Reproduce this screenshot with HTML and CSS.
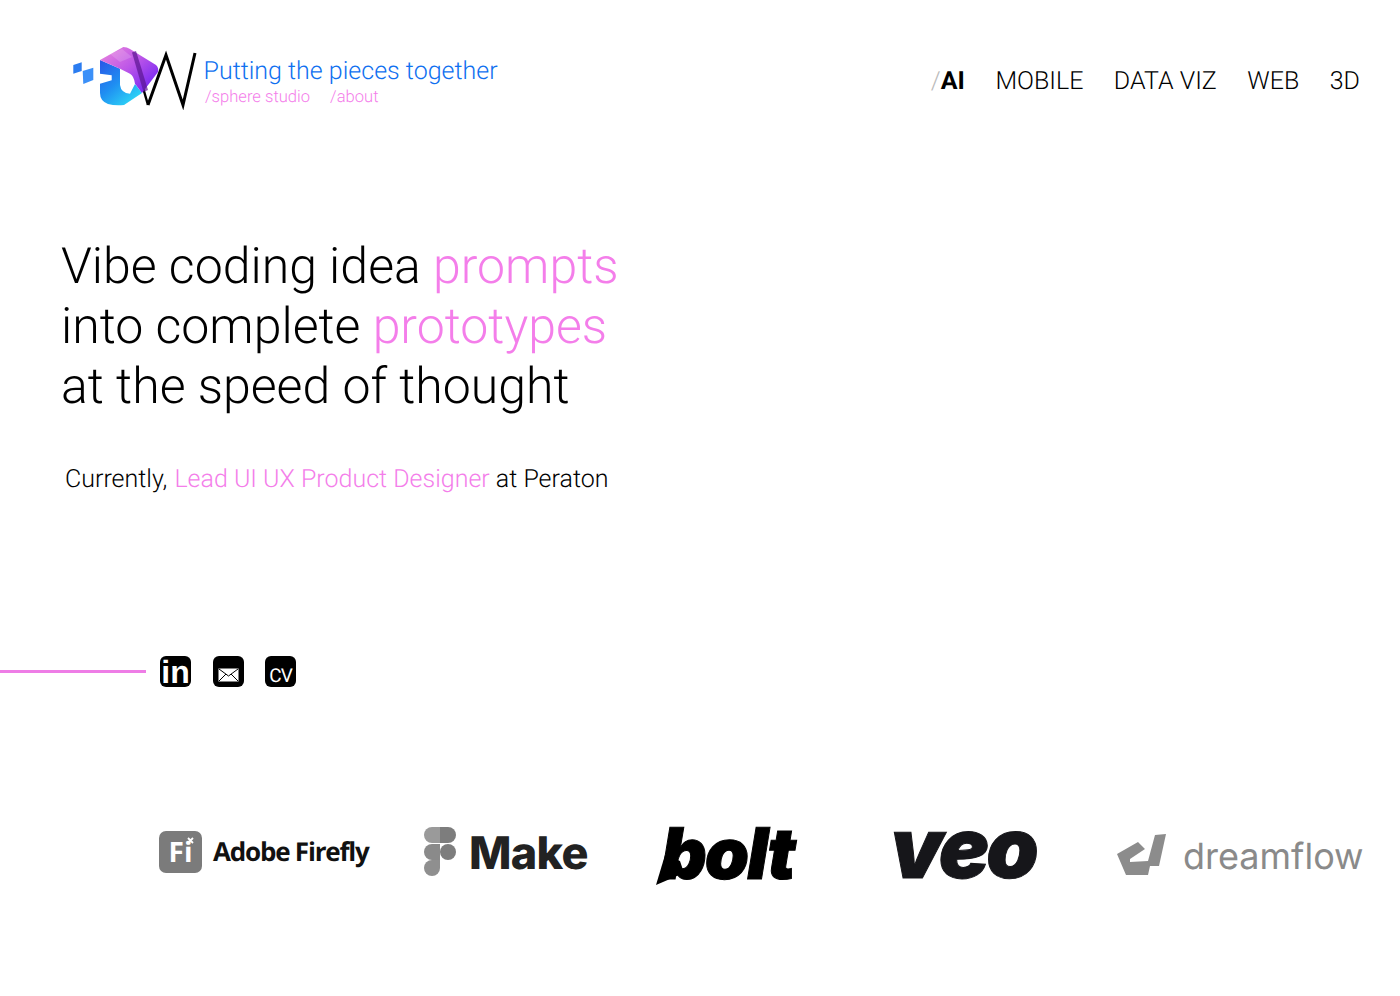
FILE: index.html
```html
<!DOCTYPE html>
<html lang="en">
<head>
<meta charset="utf-8">
<title>Sphere Studio</title>
<link rel="stylesheet" href="styles.css">
</head>
<body>
<header class="topbar">
  <div class="brand">
    <svg class="logo" width="128" height="64" viewBox="0 0 128 64" aria-label="Logo">
      <defs>
        <linearGradient id="cyan" x1="0" y1="0" x2="0.8" y2="1"><stop offset="0" stop-color="#2a55e6"/><stop offset="0.5" stop-color="#1f8ff2"/><stop offset="1" stop-color="#2fdcf6"/></linearGradient>
        <linearGradient id="purple" x1="0" y1="0" x2="1" y2="0.9"><stop offset="0" stop-color="#ee88dc"/><stop offset="0.5" stop-color="#bb55e8"/><stop offset="1" stop-color="#6a1ff4"/></linearGradient>
      </defs>
      <path d="M63 7 L78 59" fill="none" stroke="#000" stroke-width="2.4"/>
      <path d="M78 59 L96 9 L113 59 L125 7" fill="none" stroke="#000" stroke-width="3"/>
      <path d="M3.3 19 L11.7 16.3 L11.7 25 L3.3 27.7Z" fill="#2b7cf0"/>
      <path d="M12.7 25 L23.3 21.7 L23.3 34 L13.3 38Z" fill="#3b90f8"/>
      <path d="M30 14 L50 22.7 L50 39 Q51 47 60 47.7 L65 38 L72 47 L54 59 Q45 60 38 58 Q30 55 30 47 L30 37.7 L41.7 34.3 L41.7 29.3 L30 27.7Z" fill="url(#cyan)"/>
      <path d="M30 14 L53.3 1 Q57 1 60 3 L86 19 Q89 22 88 26 L72 47 L65 37.7 Q64 30 60 27.7 L50 22.7Z" fill="url(#purple)"/>
      <path d="M40 8 L52 3 L62 11 L50 16Z" fill="#fff" opacity="0.16"/>
      <path d="M62 6.5 L66 5 L78 44 L73.5 46Z" fill="#5a1590" opacity="0.7"/>
    </svg>
    <div class="brand-text">
      <p class="tagline">Putting the pieces together</p>
      <nav class="sublinks"><span>/sphere studio</span><span>/about</span></nav>
    </div>
  </div>
  <nav class="mainnav">
    <span class="nav-item"><span class="slash">/</span><b>AI</b></span>
    <span class="nav-item">MOBILE</span>
    <span class="nav-item">DATA VIZ</span>
    <span class="nav-item">WEB</span>
    <span class="nav-item">3D</span>
  </nav>
</header>

<main>
  <section class="hero">
    <h1>Vibe coding idea <em>prompts</em><br>into complete <em>prototypes</em><br>at the speed of thought</h1>
    <p class="current">Currently, <em class="role">Lead UI UX Product Designer</em> at Peraton</p>
  </section>

  <section class="social">
    <div class="rule"></div>
    <div class="icons">
      <span class="sq sq-in">in</span>
      <span class="sq sq-mail"><svg width="21" height="14" viewBox="0 0 21 14"><rect x="0.5" y="0.5" width="20" height="13" fill="#fff"/><path d="M1 1 L10.5 8 L20 1 M1 13 L8 6 M20 13 L13 6" fill="none" stroke="#000" stroke-width="1"/></svg></span>
      <span class="sq sq-cv">CV</span>
    </div>
  </section>

  <section class="tools">
    <div class="tool firefly"><span class="fi">Fi<svg class="spark" width="7" height="7" viewBox="0 0 7 7"><path d="M1 1 L6 6 M6 1 L1 6" stroke="#fff" stroke-width="1.8"/></svg></span><span class="firefly-name">Adobe Firefly</span></div>
    <div class="tool make">
      <svg width="34" height="50" viewBox="0 0 34 50"><path d="M1 8 A8 8 0 0 1 9 0 H17 V16 H9 A8 8 0 0 1 1 8Z" fill="#9a9a9a"/><path d="M17 0 H25 A8 8 0 0 1 25 16 H17Z" fill="#7d7d7d"/><circle cx="25" cy="25" r="8" fill="#7d7d7d"/><path d="M1 25 A8 8 0 0 1 9 17 H17 V33 H9 A8 8 0 0 1 1 25Z" fill="#8a8a8a"/><path d="M1 41 A8 8 0 0 1 9 33 H17 V41 A8 8 0 0 1 1 41Z" fill="#8f8f8f"/></svg>
      <span class="make-name">Make</span>
    </div>
    <div class="tool bolt"><svg class="bolt-tail" width="30" height="30" viewBox="0 0 30 30"><path d="M0 30 L9 0 L24 6 L28 18Z" fill="#000"/></svg><span class="bolt-name">bolt</span></div>
    <div class="tool veo"><span class="veo-name">veo</span></div>
    <div class="tool dream">
      <svg class="dream-mark" width="52" height="44" viewBox="0 0 52 44"><path d="M0 21 L21 9 L28 16 L13 26 L13 29 L31 28 L38 2 L49 1 L42 33 L33 33 L31 42 L9 42Z" fill="#8c8c8c"/></svg>
      <span class="dream-name">dreamflow</span>
    </div>
  </section>
</main>
</body>
</html>
```
FILE: styles.css
```css
* { box-sizing: border-box; }
html, body { margin: 0; padding: 0; }
body { width: 1400px; height: 996px; background: #fff; color: #000; font-family: Roboto, "Liberation Sans", sans-serif; font-weight: 300; overflow: hidden; text-rendering: geometricPrecision; }
em { font-style: normal; color: #f47eea; }
p, h1 { margin: 0; }

.topbar { display: flex; justify-content: space-between; align-items: flex-start; padding: 46px 40px 0 70px; height: 237px; }
.brand { display: flex; align-items: flex-start; gap: 5.5px; }
.logo { display: block; }
.brand-text { padding-top: 10px; }
.tagline { font-size: 25px; line-height: 32px; color: #0f70f0; }
.sublinks { display: flex; gap: 20px; padding-left: 1.5px; font-size: 16.6px; line-height: 19px; color: #f47eea; }
.mainnav { display: flex; gap: 30.5px; font-size: 25px; line-height: 30px; padding-top: 21px; }
.slash { color: #bbb; }
.mainnav b { font-weight: 700; }

.hero { padding-left: 61px; height: 412px; }
h1 { font-size: 50px; line-height: 60px; font-weight: 300; }
.current { font-size: 25px; line-height: 30px; margin-top: 48px; padding-left: 4px; }
.role { margin-left: 1px; }

.social { display: flex; align-items: center; gap: 14px; height: 44px; }
.rule { width: 146px; height: 3px; background: #ee7de6; }
.icons { display: flex; gap: 21.5px; }
.sq { width: 31px; height: 31px; border-radius: 6px; background: #000; color: #fff; display: flex; align-items: center; justify-content: center; }
.sq-in { font-family: "Liberation Sans", sans-serif; font-weight: 700; font-size: 32px; line-height: 31px; padding-top: 2px; }
.sq-mail { padding-top: 7px; }
.sq-cv { font-family: Roboto, sans-serif; font-weight: 400; font-size: 19px; letter-spacing: -1px; padding-top: 8px; }

.tools { display: flex; align-items: center; height: 80px; margin-top: 119px; padding-left: 159px; }
.tool { display: flex; align-items: center; flex: none; }
.firefly { width: 264px; gap: 11px; padding-bottom: 2px; }
.fi { position: relative; width: 43px; height: 42px; margin-top: 2px; border-radius: 7px; background: #7b7b7b; color: #fff; font-family: "Open Sans", sans-serif; font-weight: 700; font-size: 28px; display: flex; align-items: center; justify-content: center; }
.spark { position: absolute; top: 6px; right: 8px; }
.firefly-name { font-family: "Open Sans", sans-serif; font-weight: 700; font-size: 26px; letter-spacing: -1.2px; color: #111; }
.make { width: 233px; gap: 12px; }
.make-name { font-family: Inter, sans-serif; font-weight: 800; font-size: 45px; letter-spacing: -0.7px; line-height: 50px; padding-top: 2px; color: #222; }
.bolt { position: relative; width: 235px; padding-top: 2px; }
.bolt-name { font-family: Inter, sans-serif; font-weight: 900; font-style: italic; font-size: 71px; line-height: 80px; letter-spacing: -2px; color: #000; -webkit-text-stroke: 1px #000; margin-left: 5px; padding-top: 2px; }
.bolt-tail { position: absolute; left: 0; top: 45px; }
.veo { width: 225px; padding-bottom: 6px; margin-left: -1px; }
.veo-name { font-family: Inter, sans-serif; font-weight: 900; font-style: italic; font-size: 84px; line-height: 74px; letter-spacing: -3px; color: #16161a; -webkit-text-stroke: 1px #16161a; }
.dream { gap: 14px; padding-top: 6px; margin-left: 2px; }
.dream-name { font-family: Inter, sans-serif; font-weight: 400; font-size: 36px; line-height: 44px; padding-top: 2px; color: #8a8a8a; }
```
